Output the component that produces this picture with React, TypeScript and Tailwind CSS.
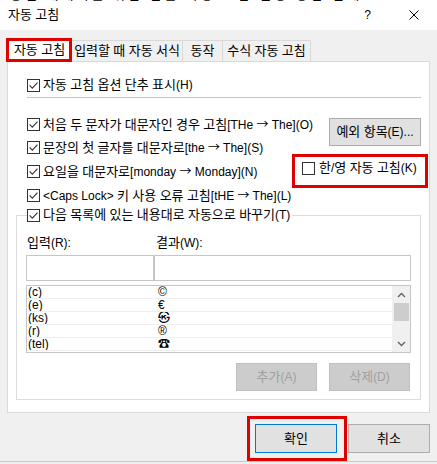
import React from "react";

function T({ s }: { s: string }) {
  const parts = s.split(/([\uac00-\ud7a3]+|→)/).filter((p) => p !== "");
  return (
    <>
      {parts.map((p, i) =>
        p === "→" ? (
          <span key={i} className="font-['Noto_Sans_CJK_KR',sans-serif] text-[12px]">
            {p}
          </span>
        ) : /[\uac00-\ud7a3]/.test(p) ? (
          <span key={i} className="text-[13px]">
            {p}
          </span>
        ) : (
          <span key={i}>{p}</span>
        )
      )}
    </>
  );
}

function Check({ checked = true }: { checked?: boolean }) {
  return (
    <span className="flex h-[13px] w-[13px] shrink-0 items-center justify-center border border-[#333333] bg-white">
      {checked && (
        <svg width="11" height="11" viewBox="0 0 11 11">
          <path d="M1.6 5.4L4.3 8.2L9.5 2.6" fill="none" stroke="#333333" strokeWidth="1.1" />
        </svg>
      )}
    </span>
  );
}

function CheckRow({ label, checked = true, h = "h-[24px]" }: { label: string; checked?: boolean; h?: string }) {
  return (
    <div className={`flex ${h} items-center gap-[3px] pl-[11px]`}>
      <Check checked={checked} />
      <span className="whitespace-nowrap leading-[16px]">
        <T s={label} />
      </span>
    </div>
  );
}

const rows: [string, string][] = [
  ["(c)", "©"],
  ["(e)", "€"],
  ["(ks)", "㉿"],
  ["(r)", "®"],
  ["(tel)", "☎"],
];

export default function App() {
  return (
    <div className="relative h-[464px] w-[437px] overflow-hidden bg-[#f0f0f0] font-['Liberation_Sans','Noto_Sans_CJK_KR',sans-serif] text-[12px] text-black">
      {/* title bar */}
      <div className="flex h-[30px] flex-col bg-white">
        <div className="h-[2px] overflow-hidden">
          <div className="-mt-[12px] whitespace-nowrap pl-[10px] text-[13px] leading-[14px] tracking-[3px]">
            종결 재배치를 위한 한글 자동 고침 설정 방법 안내
          </div>
        </div>
        <div className="flex h-[25px] items-center pl-[8px]">
          <span className="leading-[16px]">
            <T s="자동 고침" />
          </span>
          <span className="ml-auto leading-[16px]">?</span>
          <svg className="ml-[38px] mr-[18px]" width="10" height="10" viewBox="0 0 10 10">
            <path d="M0.5 0.5L9.5 9.5M9.5 0.5L0.5 9.5" stroke="#000" strokeWidth="1" />
          </svg>
        </div>
      </div>

      {/* tabs */}
      <div className="flex h-[31px] items-end pl-[7px]">
        <div className="relative flex h-[23px] w-[65px] items-center justify-center border border-b-0 border-[#d9d9d9] bg-white">
          <span className="leading-[16px]">
            <T s="자동 고침" />
          </span>
          <div className="absolute -bottom-[1px] -left-[2px] -right-[1px] -top-[1px] border-[3px] border-[#e00000]" />
        </div>
        <div className="flex h-[21px] w-[111px] items-center justify-center border-r border-t border-[#d9d9d9]">
          <span className="whitespace-nowrap leading-[16px]">
            <T s="입력할 때 자동 서식" />
          </span>
        </div>
        <div className="flex h-[21px] w-[40px] items-center justify-center border-r border-t border-[#d9d9d9]">
          <span className="leading-[16px]">
            <T s="동작" />
          </span>
        </div>
        <div className="flex h-[21px] w-[88px] items-center justify-center border-r border-t border-[#d9d9d9]">
          <span className="whitespace-nowrap leading-[16px]">
            <T s="수식 자동 고침" />
          </span>
        </div>
      </div>

      {/* panel */}
      <div className="ml-[7px] flex h-[352px] w-[423px] flex-col border border-[#d9d9d9] bg-white px-[8px]">
        <div className="mt-[15px]">
          <CheckRow label="자동 고침 옵션 단추 표시(H)" h="h-[16px]" />
        </div>
        <div className="ml-[11px] mt-[4px] h-px bg-[#c4c4c4]" />

        <div className="mt-[14px] flex">
          <div className="flex flex-col">
            <CheckRow label="처음 두 문자가 대문자인 경우 고침[THe → The](O)" h="h-[24px]" />
            <CheckRow label="문장의 첫 글자를 대문자로[the → The](S)" h="h-[23px]" />
          </div>
          <button className="ml-auto mt-[6px] flex h-[28px] w-[92px] items-center justify-center border border-[#adadad] bg-[#e1e1e1]">
            <span className="leading-[16px]">
              <T s="예외 항목(E)..." />
            </span>
          </button>
        </div>

        <div className="flex h-[24px]">
          <CheckRow label="요일을 대문자로[monday → Monday](N)" h="h-[24px]" />
          <div className="relative ml-auto mt-[1px] flex h-[16px] w-[119px] items-center gap-[4px] self-start">
            <Check checked={false} />
            <span className="whitespace-nowrap leading-[16px]">
              <T s="한/영 자동 고침(K)" />
            </span>
            <div className="absolute -bottom-[12px] -left-[10px] -right-[7px] -top-[6px] border-[3px] border-[#e00000]" />
          </div>
        </div>
        <CheckRow label="<Caps Lock> 키 사용 오류 고침[tHE → The](L)" h="h-[24px]" />

        {/* group box */}
        <div className="mt-[8px] flex h-[185px] flex-col border border-[#dcdcdc]">
          <div className="-mt-[9px] ml-[10px] flex h-[16px] w-fit items-center gap-[3px] bg-white pr-[2px]">
            <Check />
            <span className="whitespace-nowrap leading-[16px]">
              <T s="다음 목록에 있는 내용대로 자동으로 바꾸기(T)" />
            </span>
          </div>
          <div className="mt-[12px] flex h-[16px] items-center pl-[10px]">
            <span className="w-[129px] leading-[16px]">
              <T s="입력(R):" />
            </span>
            <span className="leading-[16px]">
              <T s="결과(W):" />
            </span>
          </div>
          <div className="ml-[9px] mt-[4px] flex h-[26px]">
            <div className="h-full w-[128px] border border-[#c6c6c6] bg-white" />
            <div className="h-full w-[257px] border border-[#c6c6c6] bg-white" />
          </div>
          <div className="ml-[9px] mt-[4px] flex h-[68px] w-[385px] border border-[#c6c6c6] bg-white">
            <div className="flex flex-1 flex-col">
              {rows.map(([a, b]) => (
                <div key={a} className="flex h-[13px] items-center overflow-hidden border-b border-[#efefef] pl-[1px]">
                  <span className="w-[130px] leading-[12px]">{a}</span>
                  <span className="font-['Liberation_Sans','Noto_Sans_CJK_KR','DejaVu_Sans',sans-serif] text-[12px] leading-[12px]">{b}</span>
                </div>
              ))}
            </div>
            <div className="flex w-[18px] flex-col items-center bg-[#f0f0f0]">
              <div className="flex h-[17px] items-center justify-center">
                <svg width="9" height="6" viewBox="0 0 9 6">
                  <path d="M1 5L4.5 1.5L8 5" fill="none" stroke="#606060" strokeWidth="1.3" />
                </svg>
              </div>
              <div className="h-[18px] w-[15px] bg-[#cdcdcd]" />
              <div className="flex-1" />
              <div className="flex h-[17px] items-center justify-center">
                <svg width="9" height="6" viewBox="0 0 9 6">
                  <path d="M1 1L4.5 4.5L8 1" fill="none" stroke="#606060" strokeWidth="1.3" />
                </svg>
              </div>
            </div>
          </div>
          <div className="mr-[10px] mt-[10px] flex h-[28px] justify-end gap-[12px]">
            <div className="flex w-[81px] items-center justify-center border border-[#bfbfbf] bg-[#cccccc] text-[#a0a0a0]">
              <span className="leading-[16px]">
                <T s="추가(A)" />
              </span>
            </div>
            <div className="flex w-[81px] items-center justify-center border border-[#bfbfbf] bg-[#cccccc] text-[#a0a0a0]">
              <span className="leading-[16px]">
                <T s="삭제(D)" />
              </span>
            </div>
          </div>
        </div>
      </div>

      {/* bottom buttons */}
      <div className="mt-[11px] flex h-[29px] justify-end gap-[11px] pr-[7px]">
        <div className="relative flex w-[82px] items-center justify-center border border-[#0078d7] bg-[#e1e1e1]">
          <span className="leading-[16px]">
            <T s="확인" />
          </span>
          <div className="absolute -bottom-[9px] -left-[9px] -right-[11px] -top-[9px] border-[3px] border-[#e00000]" />
        </div>
        <div className="flex w-[82px] items-center justify-center border border-[#adadad] bg-[#e1e1e1]">
          <span className="leading-[16px]">
            <T s="취소" />
          </span>
        </div>
      </div>
      <div className="mt-[8px] h-px bg-[#c8c8c8]" />
    </div>
  );
}
